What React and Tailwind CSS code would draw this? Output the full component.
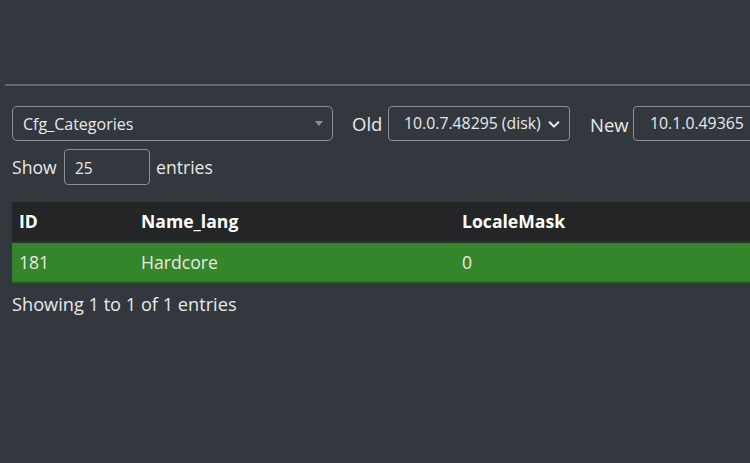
import React from "react";

// 테이블 비교 화면
const Chevron = () => (
  <svg width="14" height="14" viewBox="0 0 16 16" fill="none">
    <path d="M3 6l5 5 5-5" stroke="#e8e8e8" strokeWidth="2.4" strokeLinecap="round" strokeLinejoin="round" />
  </svg>
);

const App = () => {
  const rows = [{ id: 181, name: "Hardcore", mask: 0 }];

  return (
    <div
      className="w-[750px] h-[463px] overflow-hidden bg-[#33383e] text-[#e9e9e9] text-[17.6px]"
      style={{ fontFamily: "'Open Sans', 'Noto Sans', sans-serif" }}
    >
      <div className="pt-[84px] pl-[5px]">
        <div className="border-t-2 border-[#63686f]" />
      </div>
      <div className="pl-[12px]">
        {/* 버전 선택 */}
        <div className="flex items-center mt-[20px] h-[35px] whitespace-nowrap">
          <div className="flex shrink-0 items-center justify-between w-[321px] h-[35px] border border-[#8c9096] rounded-[5px] pl-[10px] pr-[9px]">
            <span className="text-[16px]">Cfg_Categories</span>
            <span className="w-0 h-0 border-l-[4px] border-r-[4px] border-t-[5px] border-l-transparent border-r-transparent border-t-[#8a8e93]" />
          </div>
          <span className="shrink-0 w-[36px] ml-[19px] text-[18.5px] mt-[1px]">Old</span>
          <div className="flex shrink-0 items-center justify-between w-[182px] h-[35px] border border-[#8c9096] rounded-[4px] pl-[15px] pr-[8px]">
            <span className="text-[15.8px]">10.0.7.48295 (disk)</span>
            <Chevron />
          </div>
          <span className="shrink-0 w-[43px] ml-[20px] text-[18.5px] mt-[3px]">New</span>
          <div className="flex shrink-0 items-center w-[140px] h-[35px] border border-[#8c9096] rounded-[4px] pl-[16px]">
            <span className="text-[15.8px]">10.1.0.49365</span>
          </div>
        </div>

        {/* 표시 개수 */}
        <div className="flex items-center mt-[8px] h-[36px]">
          <span className="w-[52px]">Show</span>
          <div className="flex items-center w-[86px] h-[36px] border border-[#8c9096] rounded-[4px] pl-[10px]">
            <span className="text-[15.5px] mt-[3px]">25</span>
          </div>
          <span className="ml-[6px]">entries</span>
        </div>

        {/* 테이블 */}
        <table className="mt-[17px] w-[760px] border-collapse text-left">
          <thead>
            <tr className="h-[40px] bg-[#232527] border-b-2 border-[#2d2f31]">
              <th className="w-[129px] pl-[7px] font-bold text-white">ID</th>
              <th className="w-[321px] font-bold text-white">Name_lang</th>
              <th className="font-bold text-white">LocaleMask</th>
            </tr>
          </thead>
          <tbody>
            {rows.map((r) => (
              <tr key={r.id} className="h-[40px] bg-[#35852a] border-b-2 border-[#2f6b27]">
                <td className="pl-[7px]">{r.id}</td>
                <td>{r.name}</td>
                <td>{r.mask}</td>
              </tr>
            ))}
          </tbody>
        </table>

        <div className="mt-[8px] text-[18.2px]">Showing 1 to 1 of 1 entries</div>
      </div>
    </div>
  );
};

export default App;
